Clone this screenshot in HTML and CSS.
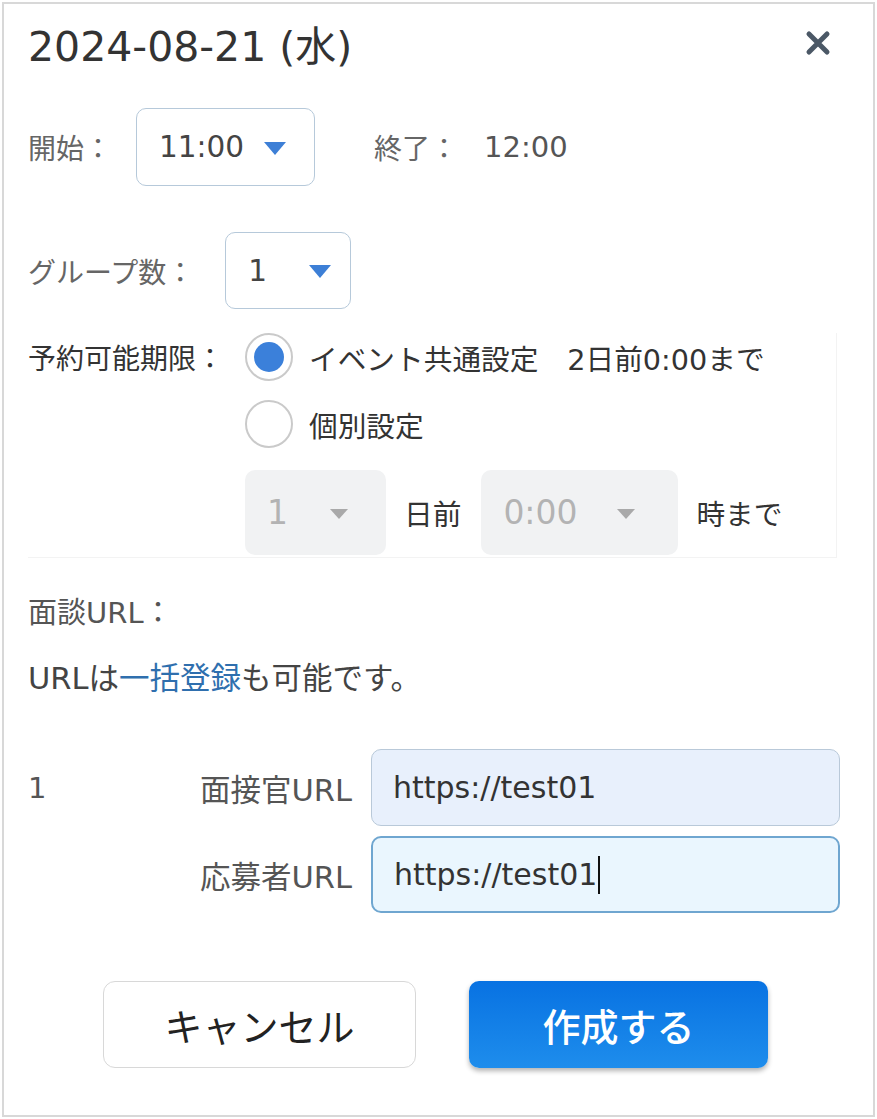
FILE: index.html
```html
<!DOCTYPE html>
<html lang="ja">
<head>
    <meta charset="UTF-8">
    <meta name="viewport" content="width=device-width, initial-scale=1.0">
    <title>予定の作成</title>
    <link rel="stylesheet" href="styles.css">
</head>
<body>
    <div class="dialog">
        <!-- Header -->
        <div class="dialog-header">
            <h1 class="dialog-title">2024-08-21 (水)</h1>
            <button class="close-button" aria-label="閉じる">
                <svg width="26" height="26" viewBox="0 0 26 26">
                    <path d="M4 4 L22 22 M22 4 L4 22" stroke="#4b5866" stroke-width="5" stroke-linecap="round"/>
                </svg>
            </button>
        </div>

        <!-- Time -->
        <div class="form-row time-row">
            <span class="label">開始：</span>
            <div class="select select-start">
                <span>11:00</span>
                <span class="caret"></span>
            </div>
            <span class="label end-label">終了：</span>
            <span class="end-value">12:00</span>
        </div>

        <div class="form-row group-row">
            <span class="label">グループ数：</span>
            <div class="select select-group">
                <span>1</span>
                <span class="caret"></span>
            </div>
        </div>

        <!-- Reservation deadline -->
        <div class="period">
            <div class="period-row">
                <span class="label label-dark period-label">予約可能期限：</span>
                <span class="radio checked"></span>
                <span class="radio-text">イベント共通設定　2日前0:00まで</span>
            </div>
            <div class="period-row indent">
                <span class="radio"></span>
                <span class="radio-text">個別設定</span>
            </div>
            <div class="period-row indent custom-row">
                <div class="select disabled select-days">
                    <span>1</span>
                    <span class="caret"></span>
                </div>
                <span class="radio-text">日前</span>
                <div class="select disabled select-hour">
                    <span>0:00</span>
                    <span class="caret"></span>
                </div>
                <span class="radio-text">時まで</span>
            </div>
        </div>

        <!-- Interview URLs -->
        <div class="section-label">面談URL：</div>
        <p class="note">URLは<a href="#" class="link">一括登録</a>も可能です。</p>

        <div class="url-group">
            <div class="url-row">
                <span class="url-index">1</span>
                <span class="url-label">面接官URL</span>
                <div class="url-input">https://test01</div>
            </div>
            <div class="url-row">
                <span class="url-index"></span>
                <span class="url-label">応募者URL</span>
                <div class="url-input focused">https://test01<span class="text-caret"></span></div>
            </div>
        </div>

        <div class="actions">
            <button class="btn btn-cancel">キャンセル</button>
            <button class="btn btn-primary">作成する</button>
        </div>
    </div>
</body>
</html>
```

FILE: styles.css
```css
body {
    margin: 0;
    padding: 2px 2px 0;
    background-color: white;
    font-family: 'DejaVu Sans', 'Noto Sans CJK JP', sans-serif;
    color: #333;
}
.dialog {
    box-sizing: border-box;
    height: 1115px;
    border: 2px solid #d8d8d8;
    padding: 18px 0 0 24px;
    background: white;
}
.dialog-header {
    display: flex;
    align-items: center;
    justify-content: space-between;
    padding-right: 42px;
    height: 50px;
}
.dialog-title {
    margin: 0;
    font-size: 41px;
    font-weight: normal;
    color: #333;
    line-height: 50px;
}
.close-button {
    border: none;
    background: none;
    padding: 0;
    margin-top: -8px;
    display: flex;
    cursor: pointer;
}
.form-row {
    display: flex;
    align-items: center;
}
.label {
    font-size: 28px;
    color: #666;
}
.label-dark {
    color: #333;
}
.time-row {
    margin-top: 36px;
}
.group-row {
    margin-top: 46px;
}
.select {
    box-sizing: border-box;
    display: flex;
    align-items: center;
    border: 1.5px solid #b6c9da;
    border-radius: 10px;
    font-size: 29.5px;
    color: #444;
}
.select-start {
    width: 179px;
    height: 78px;
    margin-left: 24px;
    padding-left: 22px;
    gap: 20px;
}
.select-group {
    width: 126px;
    height: 77px;
    margin-left: 31px;
    padding-left: 22px;
    gap: 42px;
}
.caret {
    width: 0;
    height: 0;
    border-left: 11px solid transparent;
    border-right: 11px solid transparent;
    border-top: 13px solid #3d7fd6;
    margin-top: 2px;
}
.end-label {
    margin-left: 59px;
}
.end-value {
    margin-left: 26px;
    font-size: 29px;
    color: #555;
}
.period {
    margin-top: 24px;
    width: 808px;
    padding-bottom: 2px;
    border-right: 1px solid #f3f3f3;
    border-bottom: 1px solid #f3f3f3;
}
.period-row {
    display: flex;
    align-items: center;
    min-height: 48px;
}
.period-label {
    width: 217px;
}
.indent {
    margin-left: 217px;
    margin-top: 19px;
}
.radio {
    box-sizing: border-box;
    width: 48px;
    height: 48px;
    border-radius: 50%;
    border: 2px solid #cacaca;
    background: white;
    display: flex;
    align-items: center;
    justify-content: center;
    margin-right: 16px;
}
.radio.checked::after {
    content: '';
    width: 30px;
    height: 30px;
    border-radius: 50%;
    background: #3b80da;
}
.radio-text {
    font-size: 28.7px;
    color: #333;
}
.custom-row {
    margin-top: 22px;
    gap: 18px;
}
.select.disabled {
    border: none;
    background: #f1f2f3;
    color: #b3b3b3;
    height: 85px;
    padding-left: 22px;
    font-size: 33px;
}
.select.disabled .caret {
    border-left-width: 9px;
    border-right-width: 9px;
    border-top: 10px solid #a9a9a9;
}
.select-days {
    width: 141px;
    gap: 42px;
}
.select-hour {
    width: 197px;
    gap: 40px;
    margin-left: 2px;
}
.section-label {
    margin-top: 35px;
    font-size: 29px;
    line-height: 40px;
    color: #555;
}
.note {
    margin: 26px 0 0;
    font-size: 30.5px;
    line-height: 40px;
    color: #444;
}
.link {
    color: #2f6fae;
    text-decoration: none;
}
.url-group {
    margin-top: 50px;
}
.url-row {
    display: flex;
    align-items: center;
    margin-bottom: 10px;
}
.url-index {
    width: 100px;
    font-size: 29px;
    color: #555;
    align-self: center;
}
.url-label {
    width: 224px;
    text-align: right;
    font-size: 30.5px;
    color: #555;
}
.url-input {
    box-sizing: border-box;
    display: flex;
    align-items: center;
    width: 469px;
    height: 77px;
    margin-left: 19px;
    padding-left: 21px;
    border: 1.5px solid #b9c9d9;
    border-radius: 10px;
    background: #e8f0fc;
    font-size: 30px;
    color: #333;
}
.url-input.focused {
    border: 2px solid #6fa6d0;
    background: #eaf6fe;
}
.text-caret {
    display: inline-block;
    width: 2px;
    height: 38px;
    background: #111;
    margin-left: 1px;
}
.actions {
    display: flex;
    justify-content: center;
    gap: 53px;
    margin-top: 68px;
    padding-right: 30px;
}
.btn {
    box-sizing: border-box;
    height: 87px;
    border-radius: 12px;
    font-family: 'Noto Sans CJK JP', sans-serif;
    font-size: 38px;
    cursor: pointer;
}
.btn-cancel {
    width: 313px;
    background: white;
    border: 1.5px solid #d8d8d8;
    color: #222;
}
.btn-primary {
    width: 299px;
    border: none;
    border-radius: 10px;
    background: linear-gradient(#0872e2, #1e8dec);
    color: white;
    font-weight: 500;
    box-shadow: 0 3px 5px rgba(0,0,0,0.3);
}
```
